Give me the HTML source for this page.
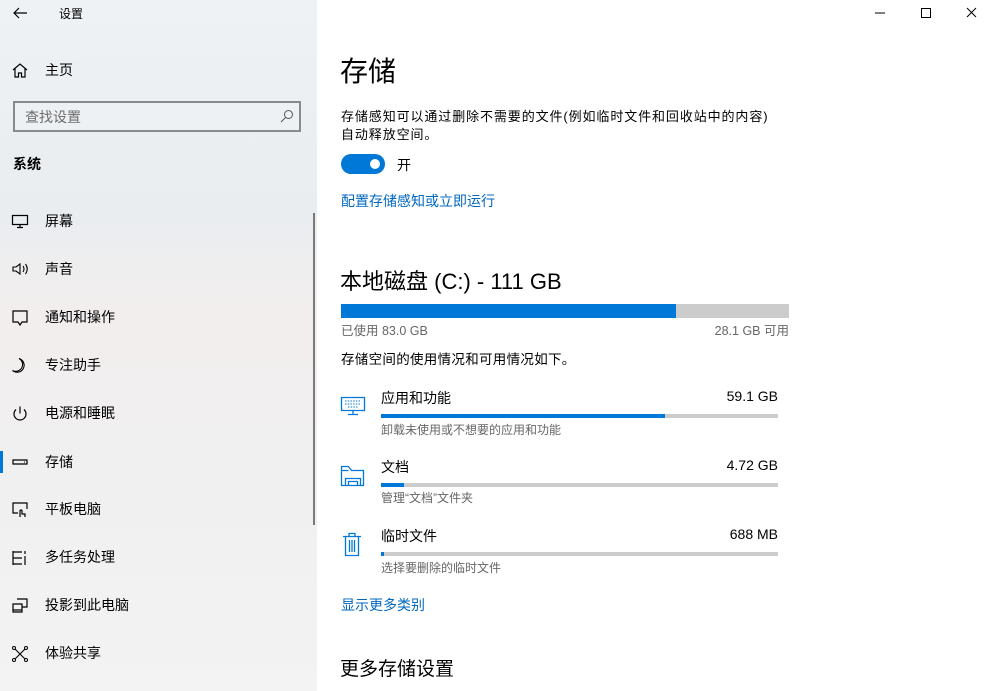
<!DOCTYPE html>
<html><head><meta charset="utf-8"><style>
*{margin:0;padding:0;box-sizing:border-box}
body{width:984px;height:691px;overflow:hidden;background:#fff;font-family:"Liberation Sans","Noto Sans CJK SC",sans-serif;color:#000;position:relative}
.side{position:absolute;left:0;top:0;width:317px;height:691px;background:linear-gradient(180deg,#eff2f4 0%,#e9edf0 30%,#f2eeee 45%,#f0f0f0 70%,#f3f3f4 100%)}
.a{position:absolute;white-space:nowrap}
.nav{position:absolute;left:0;width:317px;height:20px;font-size:14px;line-height:20px}
.nav span{position:absolute;left:45px}
.nav svg{position:absolute;left:11px;top:2px}
.blue{color:#0067c0}
.bar{position:absolute;background:#cccccc}
.bar i{position:absolute;left:0;top:0;bottom:0;background:#0078d7}
.g{color:#666}
</style></head><body>
<div class="side">
<svg class="a" style="left:12px;top:6px" width="16" height="14"><path d="M15 7H2M7 2L2 7l5 5" stroke="#000" fill="none" stroke-width="1.2"/></svg>
<div class="a" style="left:59px;top:5px;font-size:12px">设置</div>
<div class="nav" style="top:60px"><svg width="18" height="16"><path d="M2 8L9 2l7 6M4 6.5V15h3.5v-4h3v4H14V6.5" stroke="#000" fill="none" stroke-width="1.2"/></svg><span>主页</span></div>
<div class="a" style="left:13px;top:101px;width:288px;height:31px;border:2px solid #8a8a8a;background:#eef1f3"></div>
<div class="a" style="left:25px;top:107px;font-size:14px;color:#6d6d6d">查找设置</div>
<svg class="a" style="left:280px;top:109px" width="14" height="14"><circle cx="8.5" cy="5.5" r="4" stroke="#555" fill="none"/><path d="M5.5 8.5L1 13" stroke="#555"/></svg>
<div class="a" style="left:13px;top:154px;font-size:14px;font-weight:bold">系统</div>
<div class="nav" style="top:211px"><svg width="18" height="16"><path d="M1.5 2.5h15v9h-15zM9 11.5v3M6 14.5h6" stroke="#000" fill="none" stroke-width="1.2"/></svg><span>屏幕</span></div>
<div class="nav" style="top:259px"><svg width="20" height="16"><path d="M2 6h3l4-3v10L5 10H2z M12 5q2 3 0 6M14.5 3q3.5 5 0 10" stroke="#000" fill="none" stroke-width="1.1"/></svg><span>声音</span></div>
<div class="nav" style="top:307px"><svg width="18" height="18"><path d="M2 2h14v11h-5l-2 3-2-3H2z" stroke="#000" fill="none" stroke-width="1.2"/></svg><span>通知和操作</span></div>
<div class="nav" style="top:355px"><svg width="18" height="18"><path d="M8 1.5a7 7 0 1 1-6.5 12a6 6 0 0 0 6.5-12z" stroke="#000" fill="none" stroke-width="1.1"/></svg><span>专注助手</span></div>
<div class="nav" style="top:403px"><svg width="18" height="18"><path d="M5 4.5a6 6 0 1 0 8 0M9 1.5v7" stroke="#000" fill="none" stroke-width="1.2"/></svg><span>电源和睡眠</span></div>
<div class="a" style="left:0;top:451px;width:3px;height:22px;background:#0078d7"></div>
<div class="nav" style="top:452px"><svg width="18" height="16"><path d="M2 6h14v4H2z" stroke="#000" fill="none" stroke-width="1.2"/><path d="M13 8h1" stroke="#000"/></svg><span>存储</span></div>
<div class="nav" style="top:499px"><svg width="18" height="18"><path d="M7 12H2V2h14v6M9 16v-6a1 1 0 0 1 2 0v3h3v3" stroke="#000" fill="none" stroke-width="1.2"/></svg><span>平板电脑</span></div>
<div class="nav" style="top:547px"><svg width="18" height="18"><path d="M2 2v14M2 3h9M2 15h9M2 9h9M14 2v3M14 7v9" stroke="#000" fill="none" stroke-width="1.2"/></svg><span>多任务处理</span></div>
<div class="nav" style="top:595px"><svg width="18" height="18"><path d="M6 2h10v8h-5M2 7h9v8H2zM2 13h9" stroke="#000" fill="none" stroke-width="1.2"/></svg><span>投影到此电脑</span></div>
<div class="nav" style="top:643px"><svg width="18" height="18"><path d="M4 4l10 10M14 4L4 14" stroke="#000" stroke-width="1.1"/><circle cx="3" cy="3" r="1.5" fill="#fff" stroke="#000"/><circle cx="15" cy="3" r="1.5" fill="#fff" stroke="#000"/><circle cx="3" cy="15" r="1.5" fill="#fff" stroke="#000"/><circle cx="15" cy="15" r="1.5" fill="#fff" stroke="#000"/></svg><span>体验共享</span></div>
<div class="a" style="left:313px;top:213px;width:2px;height:312px;background:#7a7a7a"></div>
</div>

<svg class="a" style="left:870px;top:6px" width="112" height="14"><path d="M5 7h10" stroke="#000"/><path d="M51.5 2.5h9v9h-9z" stroke="#000" fill="none"/><path d="M97 2l9 9M106 2l-9 9" stroke="#000"/></svg>

<div class="a" style="left:340px;top:50px;font-size:28px">存储</div>
<div class="a" style="left:341px;top:108px;font-size:13px;line-height:18px;letter-spacing:0.9px">存储感知可以通过删除不需要的文件(例如临时文件和回收站中的内容)<br>自动释放空间。</div>
<div class="a" style="left:341px;top:154px;width:44px;height:20px;border-radius:10px;background:#0078d7"></div>
<div class="a" style="left:370px;top:159px;width:10px;height:10px;border-radius:5px;background:#fff"></div>
<div class="a" style="left:397px;top:155px;font-size:14px">开</div>
<div class="a blue" style="left:341px;top:191px;font-size:14px">配置存储感知或立即运行</div>

<div class="a" style="left:340px;top:264px;font-size:22px">本地磁盘 (C:) - 111 GB</div>
<div class="bar" style="left:341px;top:304px;width:448px;height:14px"><i style="width:335px"></i></div>
<div class="a g" style="left:341px;top:320px;font-size:12.5px">已使用 83.0 GB</div>
<div class="a g" style="right:195px;top:320px;font-size:12.5px">28.1 GB 可用</div>
<div class="a" style="left:341px;top:348px;font-size:13.5px;letter-spacing:0.3px">存储空间的使用情况和可用情况如下。</div>

<svg class="a" style="left:340px;top:396px" width="26" height="20"><path d="M1.5 1.5h23v13h-23zM13 14.5v4M8 18.5h10" stroke="#0078d7" fill="none" stroke-width="1.3"/><path d="M5 5h16M5 8h16M8 11h10" stroke="#0078d7" stroke-dasharray="1.5 1.2"/></svg>
<div class="a" style="left:381px;top:388px;font-size:14px">应用和功能</div>
<div class="a" style="right:206px;top:388px;font-size:14px">59.1 GB</div>
<div class="bar" style="left:381px;top:414px;width:397px;height:4px"><i style="width:284px"></i></div>
<div class="a g" style="left:381px;top:421px;font-size:12px">卸载未使用或不想要的应用和功能</div>

<svg class="a" style="left:340px;top:463px" width="26" height="24"><path d="M1.5 3.5v19h22v-15h-12l-3-4zM1.5 7.5h7M5.5 22.5v-7h15v7M8.5 22.5v-4h9v4" stroke="#0078d7" fill="none" stroke-width="1.3"/></svg>
<div class="a" style="left:381px;top:457px;font-size:14px">文档</div>
<div class="a" style="right:206px;top:457px;font-size:14px">4.72 GB</div>
<div class="bar" style="left:381px;top:483px;width:397px;height:4px"><i style="width:23px"></i></div>
<div class="a g" style="left:381px;top:489px;font-size:12px">管理“文档”文件夹</div>

<svg class="a" style="left:342px;top:532px" width="20" height="25"><path d="M1 4.5h18M7 4.5v-3h6v3M3.5 4.5v19h13v-19M7.5 8v12M10 8v12M12.5 8v12" stroke="#0078d7" fill="none" stroke-width="1.3"/></svg>
<div class="a" style="left:381px;top:526px;font-size:14px">临时文件</div>
<div class="a" style="right:206px;top:526px;font-size:14px">688 MB</div>
<div class="bar" style="left:381px;top:552px;width:397px;height:4px"><i style="width:3px"></i></div>
<div class="a g" style="left:381px;top:559px;font-size:12px">选择要删除的临时文件</div>

<div class="a blue" style="left:341px;top:595px;font-size:14px">显示更多类别</div>
<div class="a" style="left:340px;top:654px;font-size:19px">更多存储设置</div>
</body></html>
